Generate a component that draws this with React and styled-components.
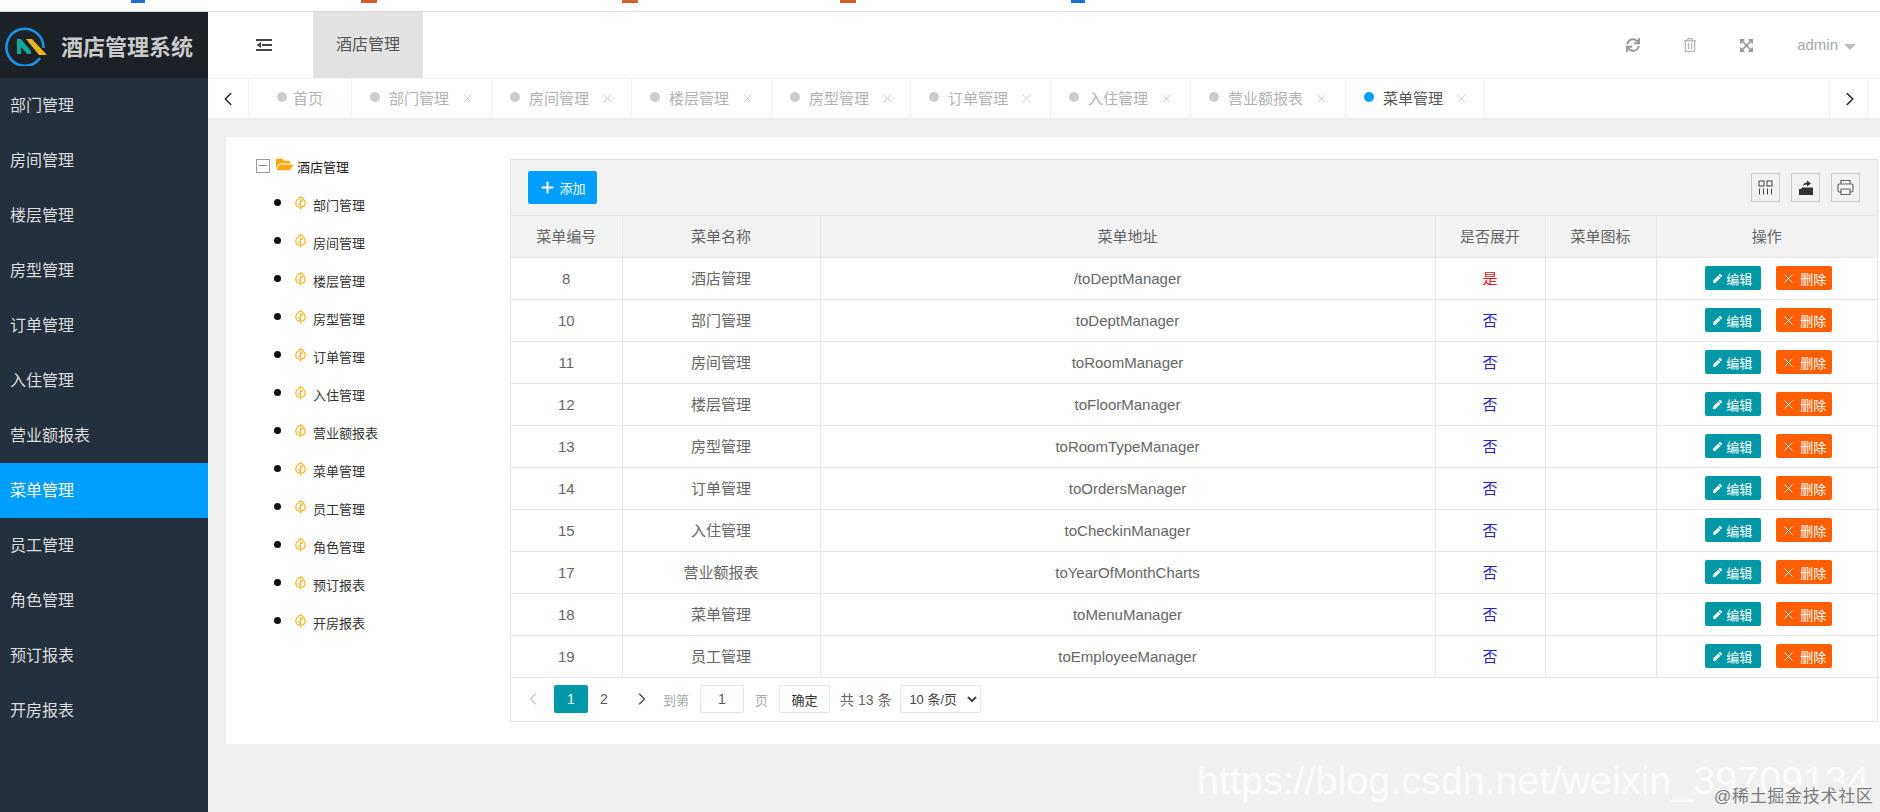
import React from "react";
import styled, { createGlobalStyle } from "styled-components";
import { ChevronLeft, ChevronRight, X, Plus } from "lucide-react";
import { FaSync, FaRegTrashAlt, FaExpandArrowsAlt, FaFolderOpen, FaPen } from "react-icons/fa";

const FONT = `"Liberation Sans", "Noto Sans CJK SC", sans-serif`;

const GlobalStyle = createGlobalStyle`
  html, body {
    margin: 0;
    padding: 0;
    height: 812px;
    overflow: hidden;
    background: #f0f0f0;
    font-family: ${FONT};
  }
  * { box-sizing: border-box; }
`;

const Page = styled.div`
  position: relative;
  width: 1880px;
  height: 812px;
  overflow: hidden;
`;
const TopStrip = styled.div`
  display: flex;
  height: 12px;
  background: #fff;
  border-bottom: 1px solid #dcdcdc;
`;
const StripMark = styled.i`
  display: block;
  height: 3px;
  width: ${(props) => props.$w}px;
  margin-left: ${(props) => props.$gap}px;
  background: ${(props) => props.$color};
`;
const Shell = styled.div`
  display: flex;
  height: 800px;
`;
const Sidebar = styled.aside`
  width: 208px;
  flex: none;
  background: #25303e;
`;
const Brand = styled.div`
  display: flex;
  align-items: center;
  height: 66px;
  padding-left: 3px;
  background: #1c2027;
`;
const BrandName = styled.span`
  margin-left: 12px;
  font-size: 22px;
  font-weight: 700;
  color: #c9c9c9;
  white-space: nowrap;
`;
const SideItem = styled.div`
  height: 55px;
  line-height: 55px;
  padding-left: 10px;
  font-size: 16px;
  color: ${(props) => (props.$active ? "#fff" : "#dcdcdc")};
  background: ${(props) => (props.$active ? "#009fff" : "transparent")};
`;
const Main = styled.main`
  flex: 1;
  min-width: 0;
  display: flex;
  flex-direction: column;
`;
const Header = styled.header`
  display: flex;
  align-items: center;
  height: 67px;
  background: #fff;
  border-bottom: 1px solid #f2f2f2;
`;
const MenuToggle = styled.div`
  width: 105px;
  height: 100%;
  padding-left: 7px;
  display: flex;
  align-items: center;
  justify-content: center;
`;
const HeaderTab = styled.div`
  width: 110px;
  height: 100%;
  line-height: 66px;
  text-align: center;
  font-size: 16px;
  color: #555;
  background: #e2e2e2;
`;
const HeaderRight = styled.div`
  margin-left: auto;
  display: flex;
  align-items: center;
  color: #999;
`;
const HeadIcon = styled.span`
  width: 57px;
  display: flex;
  justify-content: center;
  font-size: ${(props) => props.$size || 14}px;
  color: ${(props) => props.$color || "#aaa"};
`;
const UserName = styled.span`
  margin: -2px 0 0 22px;
  font-size: 15px;
  color: #a8a8a8;
`;
const Caret = styled.i`
  margin: 3px 24px 0 6px;
  width: 0;
  height: 0;
  border-left: 6px solid transparent;
  border-right: 6px solid transparent;
  border-top: 6px solid #bbb;
`;
const TabBar = styled.nav`
  display: flex;
  height: 39px;
  background: #fff;
`;
const TabArrow = styled.div`
  width: ${(props) => props.$w}px;
  flex: none;
  display: flex;
  align-items: center;
  justify-content: center;
  padding-left: ${(props) => (props.$edge ? 3 : 0)}px;
  color: #222;
  border-right: 1px solid #f2f2f2;
  border-left: ${(props) => (props.$edge ? "1px solid #f2f2f2" : "none")};
`;
const TabItem = styled.div`
  display: flex;
  align-items: center;
  width: ${(props) => props.$w}px;
  flex: none;
  padding: 0 0 3px ${(props) => (props.$home ? 28 : 18)}px;
  font-size: 15px;
  color: ${(props) => (props.$active ? "#555" : "#b3b3b3")};
  border-right: 1px solid #f2f2f2;
  white-space: nowrap;
`;
const TabDot = styled.i`
  width: 10px;
  height: 10px;
  margin-right: ${(props) => (props.$home ? 6 : 9)}px;
  border-radius: 50%;
  background: ${(props) => (props.$active ? "#009fff" : "#ccc")};
`;
const TabClose = styled.span`
  display: flex;
  margin: 2px 0 0 12px;
  color: #c4c4c4;
`;
const TabFill = styled.div`
  flex: 1;
`;
const TabTail = styled.div`
  width: 12px;
  flex: none;
`;
const Content = styled.div`
  flex: 1;
  padding: 19px 0 0 18px;
  background: #f0f0f0;
`;
const Card = styled.section`
  display: flex;
  height: 607px;
  padding: 11px 2px 0 0;
  background: #fff;
`;
const Tree = styled.div`
  width: 284px;
  flex: none;
  margin-top: -1px;
  padding-left: 30px;
`;
const RootNode = styled.div`
  display: flex;
  align-items: center;
  height: 38px;
  font-size: 13px;
  color: #222;
`;
const Toggle = styled.span`
  position: relative;
  width: 14px;
  height: 14px;
  margin: -1px 6px 0 0;
  border: 1px solid #9a9a9a;
  &::after {
    content: "";
    position: absolute;
    left: 2px;
    right: 2px;
    top: 5px;
    height: 1px;
    background: #888;
  }
`;
const FolderIcon = styled.span`
  display: flex;
  margin: -3px 4px 0 0;
  font-size: 17px;
  color: #ffa90f;
`;
const ChildNode = styled.div`
  display: flex;
  align-items: center;
  height: 38px;
  padding-left: 18px;
  font-size: 13px;
  color: #333;
`;
const Bullet = styled.i`
  width: 7px;
  height: 7px;
  margin: -3px 14px 0 0;
  border-radius: 50%;
  background: #111;
`;
const Leaf = styled.svg`
  width: 11px;
  height: 14px;
  margin: -3px 7px 0 0;
`;
const TableBox = styled.div`
  width: 1368px;
  height: 563px;
  margin-top: 11px;
  border: 1px solid #e4e4e4;
`;
const Toolbar = styled.div`
  display: flex;
  align-items: center;
  justify-content: space-between;
  height: 56px;
  padding: 0 17px;
  background: #f2f2f2;
  border-bottom: 1px solid #e6e6e6;
`;
const AddButton = styled.button`
  display: flex;
  align-items: center;
  justify-content: center;
  gap: 3px;
  width: 69px;
  height: 33px;
  padding: 0;
  border: none;
  border-radius: 2px;
  font-family: ${FONT};
  font-size: 13px;
  color: #fff;
  background: #009fff;
`;
const ToolIcons = styled.div`
  display: flex;
  gap: 11px;
`;
const ToolIcon = styled.div`
  display: flex;
  align-items: center;
  justify-content: center;
  width: 29px;
  height: 29px;
  border: 1px solid #ccc;
  color: #333;
`;
const Table = styled.table`
  width: 1366px;
  table-layout: fixed;
  border-collapse: collapse;
  color: #666;
  font-size: 15px;
`;
const Th = styled.th`
  height: 41px;
  padding: 0 0 2px;
  font-weight: 400;
  font-size: 15px;
  color: #666;
  background: #f2f2f2;
  border-right: 1px solid #e6e6e6;
  border-bottom: 1px solid #e6e6e6;
  &:last-child { border-right: none; }
`;
const Td = styled.td`
  height: 42px;
  padding: 0;
  text-align: center;
  color: #666;
  border-right: 1px solid #e6e6e6;
  border-bottom: 1px solid #e6e6e6;
  &:last-child { border-right: none; }
`;
const NameCell = styled(Td)`
  padding-bottom: 2px;
`;
const OpenFlag = styled.span`
  color: ${(props) => (props.$yes ? "#d81e1e" : "#3022c0")};
`;
const Actions = styled.div`
  display: flex;
  justify-content: center;
  gap: 15px;
  padding-left: 3px;
`;
const ActionButton = styled.button`
  display: flex;
  align-items: center;
  justify-content: center;
  gap: 4px;
  width: 56px;
  height: 24px;
  padding: 0;
  border: none;
  border-radius: 2px;
  font-family: ${FONT};
  font-size: 13px;
  color: #fff;
  background: ${(props) => (props.$danger ? "#ff5e03" : "#0097a7")};
`;
const Pager = styled.div`
  display: flex;
  align-items: center;
  height: 43px;
  padding-left: 8px;
  font-size: 14px;
  color: #666;
`;
const PagerArrow = styled.span`
  width: 28px;
  display: flex;
  justify-content: center;
  color: ${(props) => (props.$off ? "#c8c8c8" : "#444")};
`;
const PageNum = styled.span`
  width: ${(props) => (props.$active ? 34 : 32)}px;
  height: 28px;
  margin-left: ${(props) => (props.$active ? 7 : 0)}px;
  margin-right: ${(props) => (props.$active ? 0 : 8)}px;
  line-height: 28px;
  text-align: center;
  border-radius: 2px;
  color: ${(props) => (props.$active ? "#fff" : "#555")};
  background: ${(props) => (props.$active ? "#0097a7" : "transparent")};
`;
const PagerText = styled.span`
  margin-left: ${(props) => props.$gap}px;
  font-size: 13px;
  color: #aaa;
  white-space: nowrap;
`;
const PagerTotal = styled.span`
  margin-left: 10px;
  font-size: 14px;
  color: #666;
  white-space: nowrap;
`;
const PageInput = styled.input`
  width: 44px;
  height: 28px;
  margin-left: 11px;
  padding: 0;
  border: 1px solid #e6e6e6;
  border-radius: 2px;
  outline: none;
  text-align: center;
  font-family: ${FONT};
  font-size: 14px;
  color: #555;
`;
const ConfirmButton = styled.button`
  width: 51px;
  height: 28px;
  margin-left: 11px;
  padding: 0;
  border: 1px solid #e6e6e6;
  border-radius: 2px;
  background: #fff;
  font-family: ${FONT};
  font-size: 13px;
  color: #333;
`;
const SizeSelect = styled.select`
  width: 81px;
  height: 28px;
  margin-left: 9px;
  padding: 0 0 0 4px;
  border: 1px solid #e6e6e6;
  border-radius: 2px;
  background: #fff;
  font-family: ${FONT};
  font-size: 13px;
  color: #444;
  outline: none;
`;
const UrlMark = styled.div`
  position: absolute;
  left: 1197px;
  top: 752px;
  font-size: 39.5px;
  line-height: 56px;
  color: rgba(255, 255, 255, 0.72);
  white-space: nowrap;
`;
const SiteMark = styled.div`
  position: absolute;
  left: 1714px;
  top: 785px;
  font-size: 17px;
  line-height: 24px;
  letter-spacing: 0.7px;
  color: #7c7c7c;
  white-space: nowrap;
`;

const MENUS = ["部门管理", "房间管理", "楼层管理", "房型管理", "订单管理", "入住管理", "营业额报表", "菜单管理", "员工管理", "角色管理", "预订报表", "开房报表"];
const TABS = [
  { name: "首页", w: 103, home: true },
  { name: "部门管理", w: 140 },
  { name: "房间管理", w: 140 },
  { name: "楼层管理", w: 140 },
  { name: "房型管理", w: 139 },
  { name: "订单管理", w: 140 },
  { name: "入住管理", w: 140 },
  { name: "营业额报表", w: 155 },
  { name: "菜单管理", w: 139, active: true },
];
const ROWS = [
  [8, "酒店管理", "/toDeptManager", true],
  [10, "部门管理", "toDeptManager"],
  [11, "房间管理", "toRoomManager"],
  [12, "楼层管理", "toFloorManager"],
  [13, "房型管理", "toRoomTypeManager"],
  [14, "订单管理", "toOrdersManager"],
  [15, "入住管理", "toCheckinManager"],
  [17, "营业额报表", "toYearOfMonthCharts"],
  [18, "菜单管理", "toMenuManager"],
  [19, "员工管理", "toEmployeeManager"],
];
const MARKS = [
  [131, 14, "#1f6fd0"],
  [361, 16, "#d2622a"],
  [622, 16, "#d2622a"],
  [840, 16, "#d2622a"],
  [1071, 14, "#1f6fd0"],
];

function Logo() {
  return (
    <svg width="46" height="42" viewBox="0 0 46 42">
      <path d="M37 34 A18.5 18.5 0 1 1 40.4 24" fill="none" stroke="#1a93e8" strokeWidth="2.6" />
      <path d="M14 30 V15 H18 L28 27 V30 H24 L18 23 V30 Z" fill="#12a79d" />
      <path d="M23 15 H29 L44 31 H36 Z" fill="#e9b720" />
    </svg>
  );
}

function MenuIcon() {
  return (
    <svg width="16" height="12" viewBox="0 0 16 12" fill="#444">
      <rect width="16" height="2" />
      <rect x="6" y="5" width="10" height="2" />
      <rect y="10" width="16" height="2" />
      <path d="M5 3 V9 L0.5 6 Z" />
    </svg>
  );
}

function LeafIcon() {
  return (
    <Leaf viewBox="0 0 11 14" fill="none" stroke="#ffb52e" strokeWidth="1.2">
      <path d="M5.5 0.8 C8 2.6 10.2 4.6 10.2 7.2 C10.2 9.8 8 11.2 5.5 11.2 C3 11.2 0.8 9.8 0.8 7.2 C0.8 4.6 3 2.6 5.5 0.8 Z" />
      <path d="M5.5 3 V13.5 M5.5 6 L8 4.6 M5.5 9 L3 7.4" />
    </Leaf>
  );
}

function ColsIcon() {
  return (
    <svg width="15" height="15" viewBox="0 0 15 15" fill="none" stroke="#444" strokeWidth="1">
      <rect x="1" y="1" width="5" height="5" />
      <rect x="9" y="1" width="5" height="5" />
      <path d="M1.5 8.5 V14.5 M5.5 8.5 V14.5 M9.5 8.5 V14.5 M13.5 8.5 V14.5" />
    </svg>
  );
}

function ExportIcon() {
  return (
    <svg width="16" height="16" viewBox="0 0 16 16" fill="#333">
      <path d="M1 9 H3 L4 7.5 H15 V15 H1 Z" />
      <path d="M5 6 C5.5 3.5 7 2.5 9 2.5 V0.5 L13 3.5 L9 6.5 V4.5 C7.5 4.5 6.5 5 5 6 Z" />
    </svg>
  );
}

function PrintIcon() {
  return (
    <svg width="17" height="17" viewBox="0 0 17 17" fill="none" stroke="#666" strokeWidth="1.2">
      <path d="M4 5 V1.5 H13 V5" />
      <path d="M4 13 H2.5 Q1 13 1 11.5 V6.5 Q1 5 2.5 5 H14.5 Q16 5 16 6.5 V11.5 Q16 13 14.5 13 H13" />
      <path d="M4 10 H13 V15.5 H4 Z" />
    </svg>
  );
}

export default function App() {
  return (
    <Page>
      <GlobalStyle />
      <TopStrip>
        {MARKS.map(([x, w, color], i) => (
          <StripMark
            key={x}
            $w={w}
            $color={color}
            $gap={i === 0 ? x : x - MARKS[i - 1][0] - MARKS[i - 1][1]}
          />
        ))}
      </TopStrip>
      <Shell>
        <Sidebar>
          <Brand>
            <Logo />
            <BrandName>酒店管理系统</BrandName>
          </Brand>
          {MENUS.map((m) => (
            <SideItem key={m} $active={m === "菜单管理"}>
              {m}
            </SideItem>
          ))}
        </Sidebar>
        <Main>
          <Header>
            <MenuToggle>
              <MenuIcon />
            </MenuToggle>
            <HeaderTab>酒店管理</HeaderTab>
            <HeaderRight>
              <HeadIcon $color="#999"><FaSync /></HeadIcon>
              <HeadIcon $color="#b5b5b5"><FaRegTrashAlt /></HeadIcon>
              <HeadIcon $color="#999" $size={15}><FaExpandArrowsAlt /></HeadIcon>
              <UserName>admin</UserName>
              <Caret />
            </HeaderRight>
          </Header>
          <TabBar>
            <TabArrow $w={41}><ChevronLeft size={22} strokeWidth={1.6} /></TabArrow>
            {TABS.map((t) => (
              <TabItem key={t.name} $w={t.w} $active={t.active} $home={t.home}>
                <TabDot $active={t.active} $home={t.home} />
                {t.name}
                {!t.home && (
                  <TabClose>
                    <X size={13} strokeWidth={1.4} />
                  </TabClose>
                )}
              </TabItem>
            ))}
            <TabFill />
            <TabArrow $w={39} $edge><ChevronRight size={22} strokeWidth={1.6} /></TabArrow>
            <TabTail />
          </TabBar>
          <Content>
            <Card>
              <Tree>
                <RootNode>
                  <Toggle />
                  <FolderIcon><FaFolderOpen /></FolderIcon>
                  酒店管理
                </RootNode>
                {MENUS.map((m) => (
                  <ChildNode key={m}>
                    <Bullet />
                    <LeafIcon />
                    {m}
                  </ChildNode>
                ))}
              </Tree>
              <TableBox>
                <Toolbar>
                  <AddButton><Plus size={17} strokeWidth={3} />添加</AddButton>
                  <ToolIcons>
                    <ToolIcon><ColsIcon /></ToolIcon>
                    <ToolIcon><ExportIcon /></ToolIcon>
                    <ToolIcon><PrintIcon /></ToolIcon>
                  </ToolIcons>
                </Toolbar>
                <Table>
                  <colgroup>
                    <col width="111" />
                    <col width="198" />
                    <col width="615" />
                    <col width="110" />
                    <col width="111" />
                    <col />
                  </colgroup>
                  <thead>
                    <tr>
                      <Th>菜单编号</Th>
                      <Th>菜单名称</Th>
                      <Th>菜单地址</Th>
                      <Th>是否展开</Th>
                      <Th>菜单图标</Th>
                      <Th>操作</Th>
                    </tr>
                  </thead>
                  <tbody>
                    {ROWS.map(([id, name, url, open]) => (
                      <tr key={id}>
                        <Td>{id}</Td>
                        <NameCell>{name}</NameCell>
                        <Td>{url}</Td>
                        <NameCell><OpenFlag $yes={open}>{open ? "是" : "否"}</OpenFlag></NameCell>
                        <Td />
                        <Td>
                          <Actions>
                            <ActionButton><FaPen size={9} />编辑</ActionButton>
                            <ActionButton $danger><X size={15} strokeWidth={1.6} />删除</ActionButton>
                          </Actions>
                        </Td>
                      </tr>
                    ))}
                  </tbody>
                </Table>
                <Pager>
                  <PagerArrow $off><ChevronLeft size={20} strokeWidth={1.4} /></PagerArrow>
                  <PageNum $active>1</PageNum>
                  <PageNum>2</PageNum>
                  <PagerArrow><ChevronRight size={20} strokeWidth={1.4} /></PagerArrow>
                  <PagerText $gap={7}>到第</PagerText>
                  <PageInput readOnly value="1" />
                  <PagerText $gap={11}>页</PagerText>
                  <ConfirmButton>确定</ConfirmButton>
                  <PagerTotal>共 13 条</PagerTotal>
                  <SizeSelect defaultValue="10">
                    <option value="10">10 条/页</option>
                    <option value="20">20 条/页</option>
                  </SizeSelect>
                </Pager>
              </TableBox>
            </Card>
          </Content>
        </Main>
      </Shell>
      <UrlMark>https://blog.csdn.net/weixin_39709134</UrlMark>
      <SiteMark>@稀土掘金技术社区</SiteMark>
    </Page>
  );
}
